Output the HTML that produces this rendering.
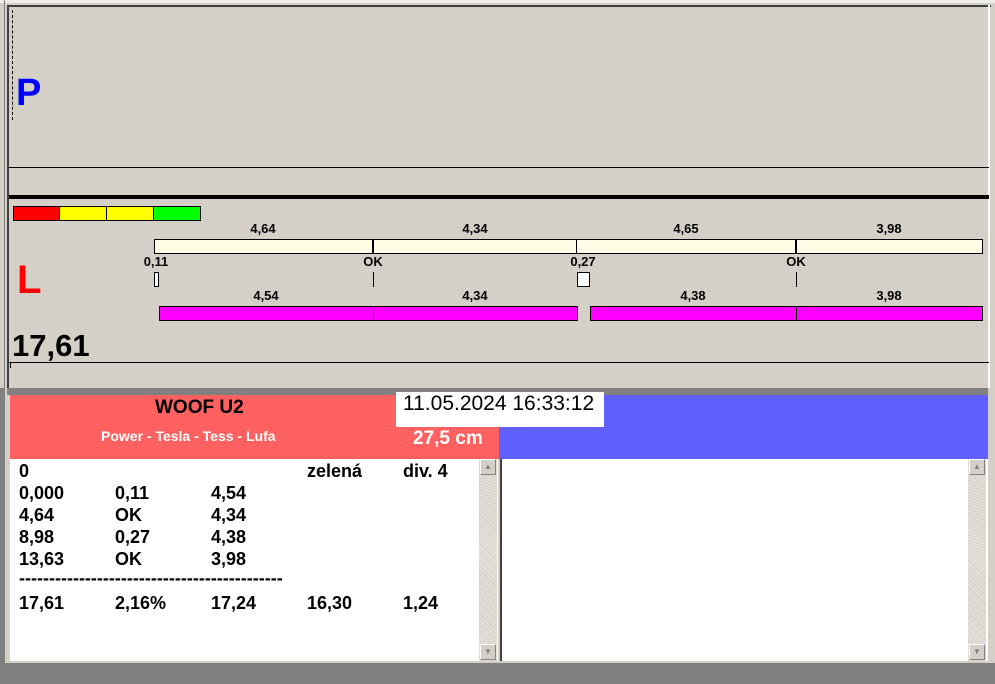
<!DOCTYPE html>
<html><head><meta charset="utf-8"><style>
*{margin:0;padding:0;box-sizing:border-box}
body{width:995px;height:684px;background:#d4d0c8;position:relative;overflow:hidden;font-family:"Liberation Sans",Arial,sans-serif}
.a{position:absolute}
.b{font-weight:bold}
.t{position:absolute;font-weight:bold;font-size:13px;color:#000;transform:translateX(-50%);white-space:nowrap}
.r{position:absolute;font-weight:bold;font-size:18px;color:#000;white-space:nowrap}
.sb{position:absolute;width:18px;background:repeating-linear-gradient(45deg,#e6e4de 0 1px,#d4d0c8 1px 2px)}
.btn{position:absolute;width:16px;height:16px;background:#d4d0c8;border:1px solid;border-color:#fff #808080 #808080 #fff;font-size:8px;color:#808080;text-align:center;line-height:14px}
</style></head><body>
<div class="a" style="left:0;top:0;width:995px;height:3px;background:#f0eee8"></div>
<div class="a" style="left:7px;top:5px;width:984px;height:2px;background:#404040"></div>
<div class="a" style="left:7px;top:5px;width:2px;height:385px;background:#404040"></div>
<div class="a" style="left:4px;top:0;width:1px;height:684px;background:#808080"></div>
<div class="a" style="left:988px;top:5px;width:2px;height:385px;background:#fff"></div>
<div class="a" style="left:12px;top:10px;width:1px;height:110px;border-left:1px dashed #000"></div>
<div class="a b" style="left:16px;top:72px;font-size:38px;color:#0000ff">P</div>
<div class="a" style="left:9px;top:167px;width:980px;height:1px;background:#000"></div>
<div class="a" style="left:9px;top:195px;width:980px;height:4px;background:#000"></div>
<div class="a" style="left:13px;top:206px;width:47px;height:15px;background:#ff0000;border:1px solid #000"></div>
<div class="a" style="left:59px;top:206px;width:48px;height:15px;background:#ffff00;border:1px solid #000"></div>
<div class="a" style="left:106px;top:206px;width:48px;height:15px;background:#ffff00;border:1px solid #000"></div>
<div class="a" style="left:153px;top:206px;width:48px;height:15px;background:#00ff00;border:1px solid #000"></div>
<div class="t" style="left:263px;top:221px">4,64</div>
<div class="t" style="left:475px;top:221px">4,34</div>
<div class="t" style="left:686px;top:221px">4,65</div>
<div class="t" style="left:889px;top:221px">3,98</div>
<div class="a" style="left:154px;top:239px;width:829px;height:15px;background:#fffde6;border:1px solid #000"></div>
<div class="a" style="left:372px;top:239px;width:2px;height:15px;background:#000"></div>
<div class="a" style="left:576px;top:239px;width:1px;height:15px;background:#000"></div>
<div class="a" style="left:795px;top:239px;width:2px;height:15px;background:#000"></div>
<div class="t" style="left:156px;top:254px">0,11</div>
<div class="t" style="left:373px;top:254px">OK</div>
<div class="t" style="left:583px;top:254px">0,27</div>
<div class="t" style="left:796px;top:254px">OK</div>
<div class="a" style="left:154px;top:272px;width:5px;height:15px;background:#fff;border:1px solid #000"></div>
<div class="a" style="left:373px;top:272px;width:1px;height:15px;background:#000"></div>
<div class="a" style="left:577px;top:272px;width:13px;height:15px;background:#fff;border:1px solid #000"></div>
<div class="a" style="left:796px;top:272px;width:1px;height:15px;background:#000"></div>
<div class="a b" style="left:17px;top:258px;font-size:40px;color:#ff0000">L</div>
<div class="t" style="left:266px;top:288px">4,54</div>
<div class="t" style="left:475px;top:288px">4,34</div>
<div class="t" style="left:693px;top:288px">4,38</div>
<div class="t" style="left:889px;top:288px">3,98</div>
<div class="a" style="left:159px;top:306px;width:419px;height:15px;background:#ff00ff;border:1px solid #000"></div>
<div class="a" style="left:373px;top:306px;width:1px;height:15px;background:#000"></div>
<div class="a" style="left:590px;top:306px;width:393px;height:15px;background:#ff00ff;border:1px solid #000"></div>
<div class="a" style="left:796px;top:306px;width:1px;height:15px;background:#000"></div>
<div class="a b" style="left:12px;top:328px;font-size:31px;color:#000">17,61</div>
<div class="a" style="left:9px;top:362px;width:980px;height:1px;background:#000"></div>
<div class="a" style="left:10px;top:363px;width:1px;height:5px;background:#000"></div>
<div class="a" style="left:0;top:388px;width:995px;height:7px;background:#808080"></div>
<div class="a" style="left:0;top:388px;width:5px;height:296px;background:#808080"></div>
<div class="a" style="left:5px;top:388px;width:2px;height:296px;background:#d4d0c8"></div>
<div class="a" style="left:988px;top:388px;width:7px;height:296px;background:#d4d0c8"></div>
<div class="a" style="left:10px;top:395px;width:489px;height:64px;background:#ff6060"></div>
<div class="a" style="left:499px;top:395px;width:489px;height:64px;background:#6060ff"></div>
<div class="a b" style="left:155px;top:397px;font-size:19px;color:#000">WOOF U2</div>
<div class="a b" style="left:101px;top:428px;font-size:14px;color:#fff">Power - Tesla - Tess - Lufa</div>
<div class="a b" style="left:413px;top:428px;font-size:19px;color:#fff">27,5 cm</div>
<div class="a" style="left:396px;top:392px;width:208px;height:35px;background:#fff"></div>
<div class="a" style="left:403px;top:392px;font-size:21px;color:#000">11.05.2024 16:33:12</div>
<div class="a" style="left:10px;top:459px;width:488px;height:202px;background:#fff"></div>
<div class="a" style="left:502px;top:459px;width:486px;height:202px;background:#fff"></div>
<div class="a" style="left:498px;top:459px;width:4px;height:203px;background:#d4d0c8"></div>
<div class="a" style="left:500px;top:459px;width:2px;height:203px;background:#404040"></div>
<div class="sb" style="left:479px;top:459px;height:202px"></div>
<div class="btn" style="left:480px;top:459px">▲</div>
<div class="btn" style="left:480px;top:644px">▼</div>
<div class="sb" style="left:968px;top:459px;height:202px"></div>
<div class="btn" style="left:969px;top:459px">▲</div>
<div class="btn" style="left:969px;top:644px">▼</div>
<div class="a" style="left:0;top:663px;width:995px;height:21px;background:#808080"></div>
<div class="a" style="left:9px;top:661px;width:980px;height:2px;background:#d4d0c8"></div>
<div class="r" style="left:19px;top:461px">0</div><div class="r" style="left:307px;top:461px">zelená</div><div class="r" style="left:403px;top:461px">div. 4</div>
<div class="r" style="left:19px;top:483px">0,000</div><div class="r" style="left:115px;top:483px">0,11</div><div class="r" style="left:211px;top:483px">4,54</div>
<div class="r" style="left:19px;top:505px">4,64</div><div class="r" style="left:115px;top:505px">OK</div><div class="r" style="left:211px;top:505px">4,34</div>
<div class="r" style="left:19px;top:527px">8,98</div><div class="r" style="left:115px;top:527px">0,27</div><div class="r" style="left:211px;top:527px">4,38</div>
<div class="r" style="left:19px;top:549px">13,63</div><div class="r" style="left:115px;top:549px">OK</div><div class="r" style="left:211px;top:549px">3,98</div>
<div class="r" style="left:19px;top:568px">--------------------------------------------</div>
<div class="r" style="left:19px;top:593px">17,61</div><div class="r" style="left:115px;top:593px">2,16%</div><div class="r" style="left:211px;top:593px">17,24</div><div class="r" style="left:307px;top:593px">16,30</div><div class="r" style="left:403px;top:593px">1,24</div>
</body></html>
